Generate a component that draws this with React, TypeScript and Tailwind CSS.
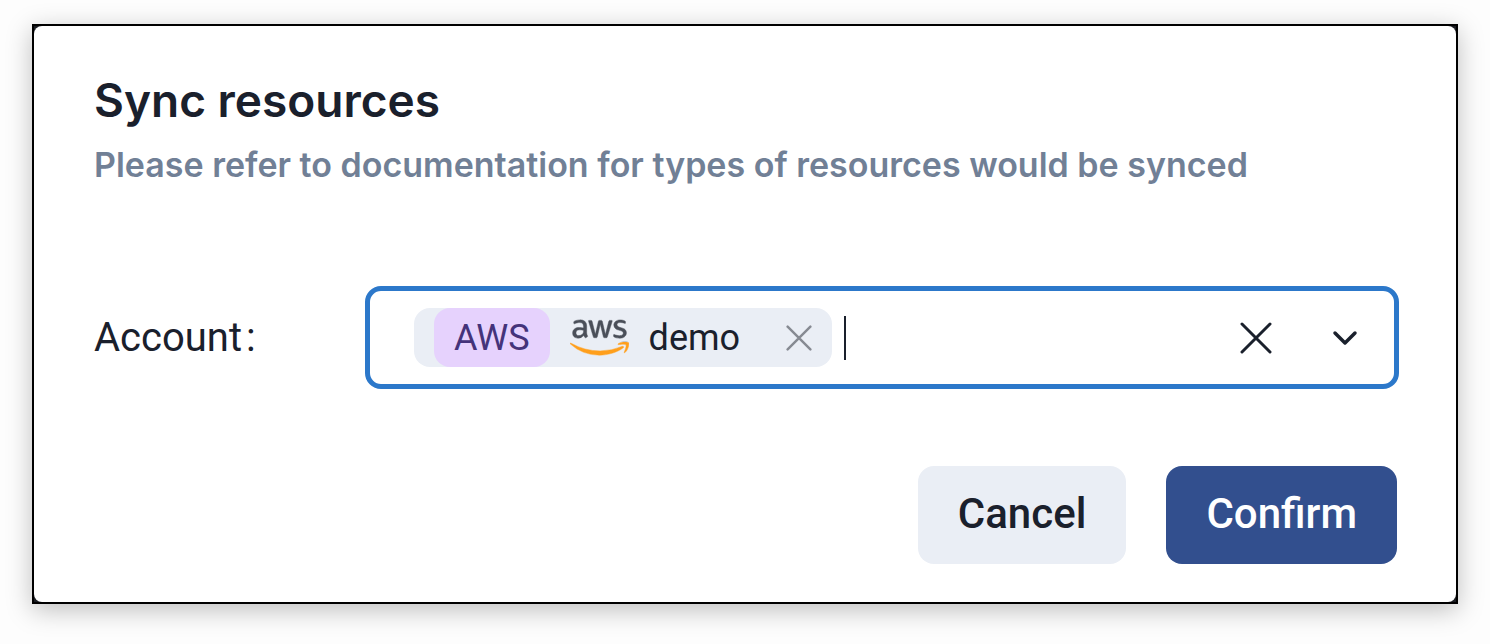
import { FaAws } from "react-icons/fa";

function Cross({ className }: { className: string }) {
  return (
    <svg viewBox="0 0 32 32" className={className} fill="none" stroke="currentColor" strokeLinecap="round" aria-hidden="true">
      <path d="M2 2 30 30M30 2 2 30" />
    </svg>
  );
}

function AwsLogo() {
  return (
    <>
      <svg className="absolute size-0" aria-hidden="true">
        <defs>
          <linearGradient id="aws-ink" gradientUnits="userSpaceOnUse" x1="0" y1="0" x2="0" y2="512">
            <stop offset="0.59" stopColor="#4a4f59" />
            <stop offset="0.59" stopColor="#ff9f1c" />
          </linearGradient>
        </defs>
      </svg>
      <FaAws className="h-[47px] w-[59px] fill-[url(#aws-ink)] stroke-[url(#aws-ink)] stroke-[5]" aria-hidden="true" />
    </>
  );
}

function AccountTag() {
  return (
    <span className="flex h-[59px] items-center rounded-2xl bg-[#eaeef5] px-5">
      <span className="flex h-full items-center rounded-2xl bg-[#e6d2fd] px-5 text-4xl text-[#44337a]">AWS</span>
      <span className="ml-5">
        <AwsLogo />
      </span>
      <span className="ml-5 text-4xl">demo</span>
      <button type="button" aria-label="Remove demo" className="ml-[46px] text-[#868a92]">
        <Cross className="size-[26px] stroke-3" />
      </button>
    </span>
  );
}

export default function App() {
  return (
    <main className="min-h-screen bg-[#fdfdfd] px-8 pt-6 pb-10 font-['Roboto',sans-serif] text-[#1a202c]">
      <section
        role="dialog"
        aria-labelledby="title"
        className="border-2 border-black bg-[#1a1c22] shadow-[0_6px_24px_rgba(0,0,0,0.25)]"
      >
        <form className="rounded-lg bg-white pt-11 pr-[57px] pb-[38px] pl-[60px]" onSubmit={(e) => e.preventDefault()}>
          <h1 id="title" className="font-['Inter',sans-serif] text-[46px] leading-[60px] font-semibold">Sync resources</h1>
          <p className="mt-[11px] font-['Inter',sans-serif] text-[34px] leading-[48px] font-semibold text-[#718096]">
            Please refer to documentation for types of resources would be synced
          </p>
          <div className="mt-[97px] flex items-center">
            <label htmlFor="account" className="w-[271px] shrink-0 text-[40px] leading-[48px]">
              Account<span className="ml-1">:</span>
            </label>
            <div className="flex h-[103px] min-w-0 flex-1 items-center rounded-2xl border-5 border-[#2c78ca] pr-9 pl-11">
              <AccountTag />
              <span className="ml-3 h-11 w-[2px] shrink-0 bg-[#1a202c]" />
              <input id="account" className="h-11 min-w-0 flex-1 text-4xl caret-transparent outline-none" />
              <button type="button" aria-label="Clear all">
                <Cross className="size-8 stroke-3" />
              </button>
              <button type="button" aria-label="Show accounts" className="ml-[60px]">
                <svg viewBox="0 0 26 16" className="h-4 w-[26px]" fill="none" stroke="currentColor" strokeWidth="3.5" strokeLinecap="round" strokeLinejoin="round" aria-hidden="true">
                  <path d="M3 3 13 13 23 3" />
                </svg>
              </button>
            </div>
          </div>
          <div className="mt-[77px] mr-0.5 flex justify-end gap-10 text-[42px] leading-[48px] font-medium">
            <button type="button" className="rounded-2xl bg-[#eaeef5] px-10 pt-6 pb-[26px]">Cancel</button>
            <button type="submit" className="rounded-2xl bg-[#324f8e] px-10 pt-6 pb-[26px] text-white">Confirm</button>
          </div>
        </form>
      </section>
    </main>
  );
}
